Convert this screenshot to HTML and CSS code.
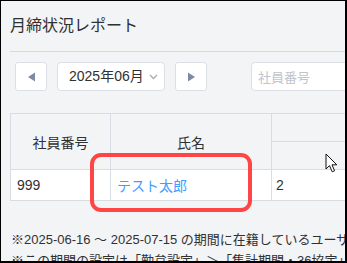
FILE: index.html
```html
<!DOCTYPE html>
<html lang="ja">
<head>
<meta charset="utf-8">
<link rel="stylesheet" href="styles.css">
</head>
<body>
<div class="frame">
  <div class="page-head">
    <h1 class="title">月締状況レポート</h1>
  </div>
  <div class="toolbar">
    <button class="nav-btn" type="button">
      <svg width="9" height="10" viewBox="0 0 9 10"><path d="M8 0.5 L8 9.5 L1 5 Z" fill="#7d8ba0"/></svg>
    </button>
    <div class="select">
      <span class="select-text">2025年06月</span>
      <svg class="chev" width="9" height="6" viewBox="0 0 9 6"><path d="M1 1 L4.5 4.5 L8 1" fill="none" stroke="#a8abb2" stroke-width="1.3"/></svg>
    </div>
    <button class="nav-btn" type="button">
      <svg width="9" height="10" viewBox="0 0 9 10"><path d="M1 0.5 L1 9.5 L8 5 Z" fill="#7d8ba0"/></svg>
    </button>
    <div class="search"><span class="placeholder">社員番号</span></div>
  </div>
  <div class="table-wrap">
    <table class="report">
      <thead>
        <tr>
          <th class="c1" rowspan="2">社員番号</th>
          <th class="c2" rowspan="2">氏名</th>
          <th class="c3 top"></th>
        </tr>
        <tr>
          <th class="c3 sub"></th>
        </tr>
      </thead>
      <tbody>
        <tr>
          <td>999</td>
          <td><span class="link">テスト太郎</span></td>
          <td>2</td>
        </tr>
      </tbody>
    </table>
    <div class="highlight"></div>
    <svg class="cursor" width="13" height="21" viewBox="0 0 13 21"><path d="M1 1 L1 16 L4.5 12.6 L7.2 18.8 L9.6 17.8 L7 11.8 L11.8 11.8 Z" fill="#fff" stroke="#111" stroke-width="1" stroke-linejoin="round"/></svg>
  </div>
  <div class="notes">
    <p>※2025-06-16 ～ 2025-07-15 の期間に在籍しているユーザーを表示しています。</p>
    <p>※この期間の設定は「勤怠設定」＞「集計期間・36協定」で変更できます。</p>
  </div>
</div>
</body>
</html>
```
FILE: styles.css
```css
html, body {
  margin: 0;
  padding: 0;
  background: #000;
}
body {
  width: 347px;
  height: 263px;
  overflow: hidden;
  font-family: "Liberation Sans", "Noto Sans CJK JP", sans-serif;
  color: #303133;
}
.frame {
  position: relative;
  margin: 1px 2px 2px 1px;
  width: 344px;
  height: 260px;
  overflow: hidden;
  background: #f3f4f6;
  padding-left: 9px;
  box-sizing: border-box;
}
.page-head {
  padding-top: 12px;
  padding-bottom: 16px;
  border-bottom: 1px solid #d6d9de;
}
.title {
  margin: 0;
  font-family: "Noto Sans CJK JP", sans-serif;
  font-size: 16px;
  font-weight: 400;
  line-height: 22px;
  color: #303133;
}
.toolbar {
  display: flex;
  align-items: center;
  margin: 10px 0 0 5px;
  height: 29px;
}
.nav-btn {
  display: flex;
  align-items: center;
  justify-content: center;
  flex-shrink: 0;
  width: 32px;
  height: 29px;
  padding: 0;
  background: #fff;
  border: 1px solid #dcdfe6;
  border-radius: 3px;
  box-sizing: border-box;
}
.select {
  display: flex;
  align-items: center;
  justify-content: space-between;
  flex-shrink: 0;
  width: 108px;
  height: 29px;
  margin: 0 10px;
  padding: 0 6px 0 11px;
  background: #fff;
  border: 1px solid #dcdfe6;
  border-radius: 4px;
  box-sizing: border-box;
  font-size: 14px;
  color: #303133;
  white-space: nowrap;
}
.select-text { line-height: 27px; }
.search {
  display: flex;
  align-items: center;
  width: 140px;
  height: 29px;
  margin-left: 44px;
  padding-left: 6px;
  background: #fff;
  border: 1px solid #dcdfe6;
  border-radius: 4px;
  box-sizing: border-box;
  flex-shrink: 0;
}
.placeholder {
  font-family: "Noto Sans CJK JP", sans-serif;
  font-size: 13px;
  color: #c0c4cc;
  white-space: nowrap;
}
.table-wrap {
  position: relative;
  margin-top: 22px;
}
.report {
  border-collapse: collapse;
  table-layout: fixed;
  width: 461px;
  font-size: 14px;
}
.report th, .report td {
  border: 1px solid #d8dce3;
  padding: 0 5px;
}
.report th {
  font-weight: 400;
  font-family: "Noto Sans CJK JP", sans-serif;
  color: #303133;
  background: #f3f4f6;
  text-align: center;
}
.report .c1 { width: 89px; }
.report .c2 { width: 150px; }
.report .c3 { width: 190px; }
.report thead tr { height: 28px; }
.report td {
  background: #fff;
  height: 30px;
  text-align: left;
  padding-left: 6px;
}
.report td:last-child { padding-left: 4px; }
.link {
  color: #409eff;
  font-family: "Noto Sans CJK JP", sans-serif;
}
.highlight {
  position: absolute;
  left: 80px;
  top: 40px;
  width: 162px;
  height: 59px;
  border: 4px solid #ff4545;
  border-radius: 11px;
  box-sizing: border-box;
}
.cursor {
  position: absolute;
  left: 315px;
  top: 40px;
}
.notes {
  margin-top: 28px;
  font-size: 13px;
  line-height: 21px;
  color: #303133;
  white-space: nowrap;
}
.notes p {
  margin: 0;
  padding-left: 1px;
}
```
